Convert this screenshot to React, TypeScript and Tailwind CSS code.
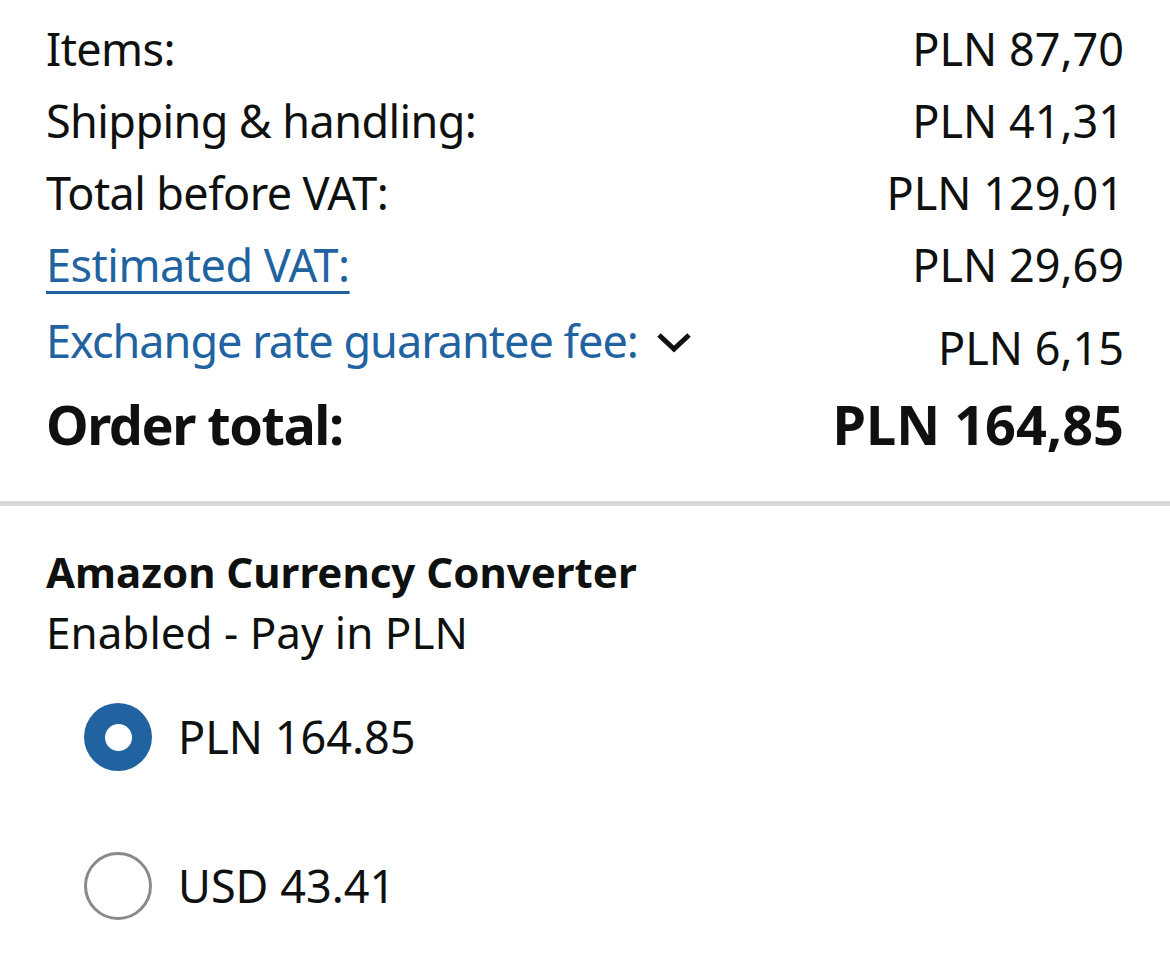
const rows = [
  { label: 'Items:', value: 'PLN 87,70' },
  { label: 'Shipping & handling:', value: 'PLN 41,31' },
  { label: 'Total before VAT:', value: 'PLN 129,01' },
];

export default function App() {
  return (
    <div className="w-[1170px] h-[963px] bg-white text-[#0f1111] font-['Noto_Sans',sans-serif] overflow-hidden">
      <div className="px-[46px] pt-[13px] pb-[47px]">
        {rows.map((r) => (
          <div key={r.label} className="flex justify-between text-[45px] leading-[72px]">
            <span className="tracking-[-0.6px]">{r.label}</span>
            <span>{r.value}</span>
          </div>
        ))}
        <div className="flex justify-between text-[45px] leading-[72px]">
          <a href="#" className="text-[#2162a1] tracking-[-0.5px] underline decoration-[3px] underline-offset-[9px]">
            Estimated VAT:
          </a>
          <span>PLN 29,69</span>
        </div>
        <div className="flex justify-between items-start text-[45px] leading-[72px] pt-[4px]">
          <span className="flex items-center text-[#2162a1] tracking-[-1px]">
            Exchange rate guarantee fee:
            <svg className="ml-[18px] mt-[2px]" width="36" height="22" viewBox="0 0 36 22" fill="none">
              <polyline points="3,4 18,18 33,4" stroke="#0f1111" strokeWidth="5" strokeLinejoin="miter" strokeLinecap="butt" />
            </svg>
          </span>
          <span className="pt-[7px]">PLN 6,15</span>
        </div>
        <div className="flex justify-between font-bold text-[54px] leading-[60px] mt-[10px]">
          <span className="tracking-[-1.5px]">Order total:</span>
          <span>PLN 164,85</span>
        </div>
      </div>
      <div className="h-[5px] bg-[#d5d9d9]" />
      <div className="px-[46px] pt-[36px]">
        <div className="font-bold text-[42px] leading-[60px]">Amazon Currency Converter</div>
        <div className="text-[44px] leading-[60px]">Enabled - Pay in PLN</div>
        <div className="flex flex-col gap-[81px] pl-[38px] pt-[41px]">
          <label className="flex items-center gap-[26px] text-[45px] leading-[68px]">
            <span className="w-[68px] h-[68px] rounded-full bg-[#2162a1] flex items-center justify-center">
              <span className="w-[27px] h-[27px] rounded-full bg-white" />
            </span>
            PLN 164.85
          </label>
          <label className="flex items-center gap-[26px] text-[45px] leading-[68px]">
            <span className="w-[68px] h-[68px] rounded-full border-[3px] border-[#8a8a8a] bg-white" />
            USD 43.41
          </label>
        </div>
      </div>
    </div>
  );
}
